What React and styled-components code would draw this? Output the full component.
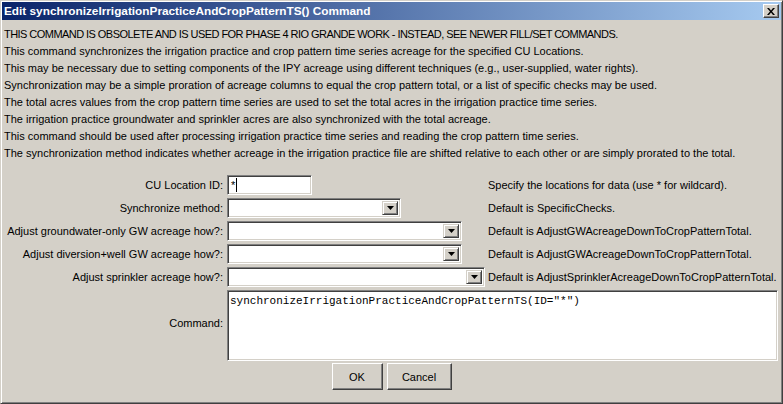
import React from 'react'
import styled, { createGlobalStyle } from 'styled-components'

const face = '#d4d0c8'
const shadow = '#808080'
const darkShadow = '#404040'

const GlobalStyle = createGlobalStyle`
  html, body {
    margin: 0;
    padding: 0;
    background: ${face};
  }
  * {
    box-sizing: border-box;
  }
`

const Window = styled.div`
  width: 783px;
  height: 404px;
  background: ${face};
  border: 1px solid;
  border-color: ${face} ${darkShadow} ${darkShadow} ${face};
  box-shadow: inset 1px 1px #fff, inset -1px -1px ${shadow};
  padding: 1px;
  display: flex;
  flex-direction: column;
  font-family: 'Liberation Sans', Arial, sans-serif;
  font-size: 11px;
  color: #000;
`

const TitleBar = styled.div`
  height: 18px;
  flex: none;
  display: flex;
  align-items: center;
  justify-content: space-between;
  padding: 0 2px 0 2px;
  background: linear-gradient(to right, #0a246a, #a6caf0);
`

const TitleText = styled.span`
  color: #fff;
  font-weight: bold;
  font-size: 11.8px;
`

const CloseButton = styled.div`
  width: 16px;
  height: 14px;
  background: ${face};
  border: 1px solid;
  border-color: #fff ${darkShadow} ${darkShadow} #fff;
  box-shadow: inset -1px -1px ${shadow};
  display: flex;
  align-items: center;
  justify-content: center;
`

const Body = styled.div`
  flex: 1;
  display: flex;
  flex-direction: column;
  padding: 6px 2px 0 2px;
`

const Notes = styled.div`
  line-height: 17px;
  white-space: nowrap;
`

// the hinted caps of the original are narrower than Liberation's
const NoteLine = styled.div`
  letter-spacing: ${(p) => (p.$caps ? '-0.55px' : '0')};
`

const Form = styled.div`
  margin-top: 13px;
  display: grid;
  grid-template-columns: 223px 258px minmax(0, 1fr);
  grid-auto-rows: 20px;
  row-gap: 3px;
`

const Label = styled.div`
  align-self: center;
  text-align: right;
  padding-right: 4px;
  white-space: nowrap;
`

const Help = styled.div`
  align-self: center;
  padding-left: 3px;
  white-space: nowrap;
`

const Sunken = styled.div`
  background: #fff;
  border: 1px solid;
  border-color: ${shadow} #fff #fff ${shadow};
  box-shadow: inset 1px 1px ${darkShadow}, inset -1px -1px ${face};
`

const TextField = styled(Sunken)`
  width: ${(p) => p.$width}px;
  height: 20px;
  display: flex;
  align-items: center;
  padding-left: 3px;
`

const Caret = styled.span`
  display: inline-block;
  width: 1px;
  height: 14px;
  margin-left: 1px;
  background: #000;
`

const Combo = styled(Sunken)`
  width: ${(p) => p.$width}px;
  height: 20px;
  display: flex;
  justify-content: flex-end;
  padding: 2px;
`

const ArrowButton = styled.div`
  width: 16px;
  height: 100%;
  background: ${face};
  border: 1px solid;
  border-color: ${face} ${darkShadow} ${darkShadow} ${face};
  box-shadow: inset 1px 1px #fff, inset -1px -1px ${shadow};
  display: flex;
  align-items: center;
  justify-content: center;
`

const CommandLabel = styled(Label)`
  grid-row: span 3;
`

const CommandArea = styled(Sunken)`
  grid-column: 2 / 4;
  grid-row: span 3;
  height: 71px;
  margin-right: 1px;
  padding: 3px 2px;
  font-family: 'Liberation Mono', 'Courier New', monospace;
  font-size: 11px;
  line-height: 14px;
  white-space: pre;
`

const ButtonRow = styled.div`
  display: flex;
  justify-content: center;
  gap: 4px;
  margin-top: 7px;
`

const Button = styled.div`
  width: ${(p) => p.$width}px;
  height: 27px;
  background: ${face};
  border: 1px solid;
  border-color: #fff ${darkShadow} ${darkShadow} #fff;
  box-shadow: inset -1px -1px ${shadow};
  display: flex;
  align-items: center;
  justify-content: center;
`

const notes = [
  'THIS COMMAND IS OBSOLETE AND IS USED FOR PHASE 4 RIO GRANDE WORK - INSTEAD, SEE NEWER FILL/SET COMMANDS.',
  'This command synchronizes the irrigation practice and crop pattern time series acreage for the specified CU Locations.',
  'This may be necessary due to setting components of the IPY acreage using different techniques (e.g., user-supplied, water rights).',
  'Synchronization may be a simple proration of acreage columns to equal the crop pattern total, or a list of specific checks may be used.',
  'The total acres values from the crop pattern time series are used to set the total acres in the irrigation practice time series.',
  'The irrigation practice groundwater and sprinkler acres are also synchronized with the total acreage.',
  'This command should be used after processing irrigation practice time series and reading the crop pattern time series.',
  'The synchronization method indicates whether acreage in the irrigation practice file are shifted relative to each other or are simply prorated to the total.',
]

const combos = [
  {
    label: 'Synchronize method:',
    width: 174,
    help: 'Default is SpecificChecks.',
  },
  {
    label: 'Adjust groundwater-only GW acreage how?:',
    width: 235,
    help: 'Default is AdjustGWAcreageDownToCropPatternTotal.',
  },
  {
    label: 'Adjust diversion+well GW acreage how?:',
    width: 235,
    help: 'Default is AdjustGWAcreageDownToCropPatternTotal.',
  },
  {
    label: 'Adjust sprinkler acreage how?:',
    width: 258,
    help: 'Default is AdjustSprinklerAcreageDownToCropPatternTotal.',
  },
]

function DownArrow() {
  return (
    <svg width="7" height="4" viewBox="0 0 7 4">
      <path d="M0 0h7L3.5 4z" fill="#000" />
    </svg>
  )
}

function CloseGlyph() {
  return (
    <svg width="8" height="7" viewBox="0 0 8 7">
      <path
        d="M0 0h2l2 2.5L6 0h2L5 3.5 8 7H6L4 4.5 2 7H0l3-3.5z"
        fill="#000"
      />
    </svg>
  )
}

export default function App() {
  return (
    <>
      <GlobalStyle />
      <Window>
        <TitleBar>
          <TitleText>
            Edit synchronizeIrrigationPracticeAndCropPatternTS() Command
          </TitleText>
          <CloseButton>
            <CloseGlyph />
          </CloseButton>
        </TitleBar>
        <Body>
          <Notes>
            {notes.map((line, i) => (
              <NoteLine key={line} $caps={i === 0}>
                {line}
              </NoteLine>
            ))}
          </Notes>
          <Form>
            <Label>CU Location ID:</Label>
            <TextField $width={85}>
              *<Caret />
            </TextField>
            <Help>Specify the locations for data (use * for wildcard).</Help>
            {combos.map((c) => (
              <React.Fragment key={c.label}>
                <Label>{c.label}</Label>
                <Combo $width={c.width}>
                  <ArrowButton>
                    <DownArrow />
                  </ArrowButton>
                </Combo>
                <Help>{c.help}</Help>
              </React.Fragment>
            ))}
            <CommandLabel>Command:</CommandLabel>
            <CommandArea>
              synchronizeIrrigationPracticeAndCropPatternTS(ID="*")
            </CommandArea>
          </Form>
          <ButtonRow>
            <Button $width={51}>OK</Button>
            <Button $width={65}>Cancel</Button>
          </ButtonRow>
        </Body>
      </Window>
    </>
  )
}
